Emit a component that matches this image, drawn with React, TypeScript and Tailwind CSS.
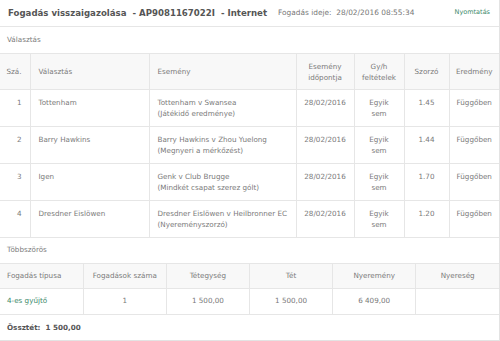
const rows = [
  { n: 1, sel: "Tottenham", ev: "Tottenham v Swansea", sub: "(Játékidő eredménye)", odds: "1.45" },
  { n: 2, sel: "Barry Hawkins", ev: "Barry Hawkins v Zhou Yuelong", sub: "(Megnyeri a mérkőzést)", odds: "1.44" },
  { n: 3, sel: "Igen", ev: "Genk v Club Brugge", sub: "(Mindkét csapat szerez gólt)", odds: "1.70" },
  { n: 4, sel: "Dresdner Eislöwen", ev: "Dresdner Eislöwen v Heilbronner EC", sub: "(Nyereményszorzó)", odds: "1.20" },
];

export default function App() {
  return (
    <div className="h-[341px] w-[500px] overflow-hidden bg-white text-[7.2px] text-[#7a7a7a] [font-family:'DejaVu_Sans',Verdana,sans-serif]">
      <div className="h-[341px] border-r border-b border-[#e3e3e3]">
        <div className="flex h-[27px] items-center border-b border-[#e6e6e6] pl-2 pr-[9px]">
          <span className="text-[8.6px] font-bold text-[#555]">Fogadás visszaigazolása&nbsp; - AP9081167022I&nbsp; - Internet</span>
          <span className="ml-[11px] text-[7.4px] text-[#777]">Fogadás ideje:&nbsp; 28/02/2016 08:55:34</span>
          <span className="ml-auto text-[6.5px] text-[#3d8a6b]">Nyomtatás</span>
        </div>
        <div className="flex h-[26px] items-center pl-[7px]">Választás</div>
        <table className="w-full border-collapse">
          <thead>
            <tr className="h-[36px] border-y border-[#e6e6e6] bg-[#f8f8f8] leading-[11px]">
              <th className="w-[30px] border-r border-[#e6e6e6] pr-2 text-right font-normal">Szá.</th>
              <th className="w-[119px] border-r border-[#e6e6e6] pl-2 text-left font-normal">Választás</th>
              <th className="w-[147px] border-r border-[#e6e6e6] pl-2 text-left font-normal">Esemény</th>
              <th className="w-[58px] border-r border-[#e6e6e6] text-center font-normal">Esemény<br />időpontja</th>
              <th className="w-[50px] border-r border-[#e6e6e6] text-center font-normal">Gy/h<br />feltételek</th>
              <th className="w-[45px] border-r border-[#e6e6e6] text-center font-normal">Szorzó</th>
              <th className="text-center font-normal">Eredmény</th>
            </tr>
          </thead>
          <tbody>
            {rows.map((r) => (
              <tr key={r.n} className="h-[37px] border-b border-[#e6e6e6] align-top leading-[11px]">
                <td className="border-r border-[#e6e6e6] pt-[7px] pr-2 text-right">{r.n}</td>
                <td className="border-r border-[#e6e6e6] pt-[7px] pl-2">{r.sel}</td>
                <td className="border-r border-[#e6e6e6] pt-[7px] pl-2">
                  {r.ev}
                  <br />
                  {r.sub}
                </td>
                <td className="border-r border-[#e6e6e6] pt-[7px] text-center">28/02/2016</td>
                <td className="border-r border-[#e6e6e6] pt-[7px] text-center">
                  Egyik
                  <br />
                  sem
                </td>
                <td className="border-r border-[#e6e6e6] pt-[7px] text-center">{r.odds}</td>
                <td className="pt-[7px] text-center">Függőben</td>
              </tr>
            ))}
          </tbody>
        </table>
        <div className="flex h-[25px] items-center pl-[7px]">Többszörös</div>
        <table className="w-full table-fixed border-collapse">
          <thead>
            <tr className="h-[25px] border-y border-[#e6e6e6] bg-[#f8f8f8]">
              <th className="border-r border-[#e6e6e6] pl-[7px] text-left font-normal">Fogadás típusa</th>
              <th className="border-r border-[#e6e6e6] text-center font-normal">Fogadások száma</th>
              <th className="border-r border-[#e6e6e6] text-center font-normal">Tétegység</th>
              <th className="border-r border-[#e6e6e6] text-center font-normal">Tét</th>
              <th className="border-r border-[#e6e6e6] text-center font-normal">Nyeremény</th>
              <th className="text-center font-normal">Nyereség</th>
            </tr>
          </thead>
          <tbody>
            <tr className="h-[26px] border-b border-[#e6e6e6]">
              <td className="border-r border-[#e6e6e6] pl-[7px] text-[#3d8a6b]">4-es gyűjtő</td>
              <td className="border-r border-[#e6e6e6] text-center">1</td>
              <td className="border-r border-[#e6e6e6] text-center">1 500,00</td>
              <td className="border-r border-[#e6e6e6] text-center">1 500,00</td>
              <td className="border-r border-[#e6e6e6] text-center">6 409,00</td>
              <td></td>
            </tr>
          </tbody>
        </table>
        <div className="flex h-[26px] items-center pl-[7px] font-bold text-[#555]">Össztét:&nbsp; 1 500,00</div>
      </div>
    </div>
  );
}
